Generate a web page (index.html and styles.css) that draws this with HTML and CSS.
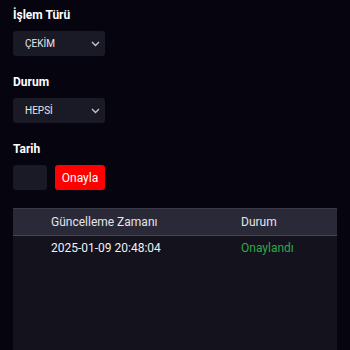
FILE: index.html
```html
<!DOCTYPE html>
<html lang="tr">
<head>
    <meta charset="UTF-8">
    <meta name="viewport" content="width=device-width, initial-scale=1.0">
    <title>İşlemler</title>
    <link rel="stylesheet" href="styles.css">
</head>
<body>
    <div class="filters">
        <div class="field">
            <label class="field-label">İşlem Türü</label>
            <div class="select">
                <span>ÇEKİM</span>
                <svg class="chevron" width="9" height="6" viewBox="0 0 9 6"><path d="M1 1l3.5 3.5L8 1" fill="none" stroke="#c8c8d0" stroke-width="1.3"/></svg>
            </div>
        </div>

        <div class="field">
            <label class="field-label">Durum</label>
            <div class="select">
                <span>HEPSİ</span>
                <svg class="chevron" width="9" height="6" viewBox="0 0 9 6"><path d="M1 1l3.5 3.5L8 1" fill="none" stroke="#c8c8d0" stroke-width="1.3"/></svg>
            </div>
        </div>

        <div class="field">
            <label class="field-label">Tarih</label>
            <div class="date-row">
                <div class="date-input"></div>
                <button class="btn-confirm">Onayla</button>
            </div>
        </div>
    </div>

    <div class="table">
        <div class="table-head">
            <div class="cell cell-id"></div>
            <div class="cell cell-time">Güncelleme Zamanı</div>
            <div class="cell cell-status">Durum</div>
        </div>
        <div class="table-body">
            <div class="table-row">
                <div class="cell cell-id"></div>
                <div class="cell cell-time">2025-01-09 20:48:04</div>
                <div class="cell cell-status status-ok">Onaylandı</div>
            </div>
        </div>
    </div>
</body>
</html>
```

FILE: styles.css
```css
body {
    margin: 0;
    padding: 0;
    background: #05040f;
    color: #fff;
    font-family: Roboto, 'Liberation Sans', sans-serif;
    height: 100vh;
    overflow: hidden;
}

.filters {
    padding: 7px 13px 0;
}

.field {
    margin-bottom: 18px;
}

.field-label {
    display: block;
    font-size: 12px;
    font-weight: bold;
    line-height: 16px;
    margin-bottom: 8px;
}

.select {
    width: 92px;
    height: 25px;
    box-sizing: border-box;
    background: #1a1a26;
    border-radius: 3px;
    display: flex;
    align-items: center;
    justify-content: space-between;
    padding: 0 5px 0 12px;
    font-size: 10px;
    color: #e6e6ea;
}

.chevron {
    display: block;
}

.date-row {
    display: flex;
    gap: 8px;
}

.date-input {
    width: 34px;
    height: 25px;
    background: #1a1a26;
    border-radius: 3px;
}

.btn-confirm {
    width: 50px;
    height: 25px;
    background: #ff0000;
    color: #fff;
    border: none;
    border-radius: 3px;
    padding: 0;
    font-family: Roboto, 'Liberation Sans', sans-serif;
    font-size: 12px;
}

.table {
    margin: 0 13px;
    background: #13121d;
}

.table-head,
.table-row {
    display: flex;
    align-items: center;
    font-size: 12px;
}

.table-head {
    height: 26px;
    background: #2a2937;
    border-top: 1px solid #3b3a48;
    border-bottom: 1px solid #454452;
    color: #e4e4ea;
}

.table-row {
    height: 24px;
    color: #f0f0f4;
}

.table-body {
    min-height: 115px;
}

.cell-id {
    width: 38px;
}

.cell-time {
    width: 190px;
}

.status-ok {
    color: #2fa84a;
}
```
